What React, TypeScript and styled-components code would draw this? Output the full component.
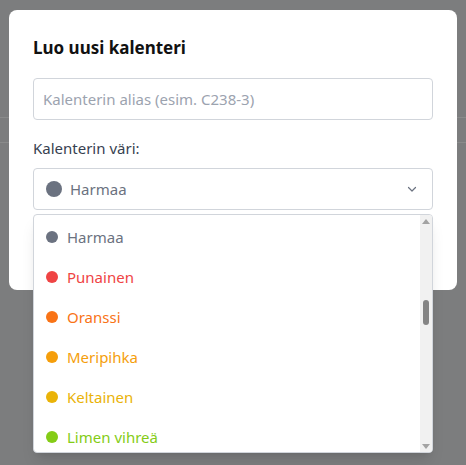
import React from "react";
import styled, { createGlobalStyle } from "styled-components";

const Global = createGlobalStyle`
  html, body { margin: 0; padding: 0; }
  body {
    font-family: "Noto Sans", "Open Sans", Arial, sans-serif;
    background: #7c7d7e;
  }
  * { box-sizing: border-box; }
`;

const Page = styled.div`
  position: relative;
  width: 466px;
  height: 465px;
  overflow: hidden;
  background: #7c7d7e;
  display: flex;
  flex-direction: column;
`;

const Backdrop = styled.div`
  position: absolute;
  inset: 0;
  display: flex;
  flex-direction: column;
  pointer-events: none;
`;

const BackLine = styled.div<{ $top: number }>`
  margin-top: ${(p) => p.$top}px;
  height: 1px;
  background: #8a8b8b;
`;

const Modal = styled.div`
  position: relative;
  margin: 10px 9px 0 9px;
  width: 448px;
  background: #ffffff;
  border-radius: 8px;
  padding: 24px;
  display: flex;
  flex-direction: column;
`;

const Title = styled.h2`
  margin: 0;
  font-size: 17px;
  line-height: 28px;
  font-weight: 700;
  color: #111111;
`;

const Input = styled.input`
  margin-top: 16px;
  height: 42px;
  width: 100%;
  border: 1px solid #d1d5db;
  border-radius: 4px;
  padding: 0 9px;
  font-family: inherit;
  font-size: 15px;
  color: #111827;
  outline: none;
  &::placeholder { color: #9ca3af; }
`;

const Label = styled.div`
  margin-top: 16px;
  font-size: 15px;
  line-height: 24px;
  color: #374151;
`;

const SelectWrap = styled.div`
  position: relative;
  margin-top: 8px;
`;

const SelectBox = styled.div`
  height: 42px;
  border: 1px solid #d1d5db;
  border-radius: 4px;
  padding: 0 14px 0 12px;
  display: flex;
  align-items: center;
  gap: 8px;
`;

const Dot = styled.span<{ $color: string; $size: number }>`
  flex: none;
  width: ${(p) => p.$size}px;
  height: ${(p) => p.$size}px;
  border-radius: 50%;
  background: ${(p) => p.$color};
`;

const SelectText = styled.span`
  flex: 1;
  font-size: 15px;
  color: #6b7280;
`;

const Footer = styled.div`
  height: 56px;
`;

const Dropdown = styled.div`
  position: absolute;
  top: calc(100% + 4px);
  left: 0;
  right: 0;
  height: 239px;
  background: #ffffff;
  border: 1px solid #d1d5db;
  border-radius: 4px;
  box-shadow: 0 10px 15px -3px rgba(0, 0, 0, 0.1), 0 4px 6px -4px rgba(0, 0, 0, 0.1);
  display: flex;
  overflow: hidden;
  z-index: 10;
`;

const List = styled.ul`
  flex: 1;
  margin: 0;
  padding: 2px 0 0 0;
  list-style: none;
`;

const Item = styled.li<{ $color: string }>`
  height: 40px;
  display: flex;
  align-items: center;
  gap: 9px;
  padding-left: 12px;
  font-size: 15px;
  color: ${(p) => p.$color};
`;

const Scrollbar = styled.div`
  flex: none;
  width: 12px;
  background: #f1f1f1;
  display: flex;
  flex-direction: column;
  align-items: center;
`;

const Arrow = styled.div<{ $up?: boolean }>`
  flex: none;
  height: 12px;
  display: flex;
  align-items: center;
  justify-content: center;
  width: 0;
  &::before {
    content: "";
    border-left: 4px solid transparent;
    border-right: 4px solid transparent;
    ${(p) => (p.$up ? "border-bottom: 5px solid #a3a3a3;" : "border-top: 5px solid #a3a3a3;")}
  }
`;

const Track = styled.div`
  flex: 1;
  width: 100%;
  display: flex;
  flex-direction: column;
  align-items: center;
`;

const Thumb = styled.div`
  margin-top: 73px;
  width: 6px;
  height: 25px;
  border-radius: 3px;
  background: #858585;
`;

const Chevron = () => (
  <svg width="12" height="12" viewBox="0 0 12 12" fill="none">
    <polyline points="2.5,4.5 6,8 9.5,4.5" stroke="#6b7280" strokeWidth="1.2" strokeLinecap="round" strokeLinejoin="round" />
  </svg>
);

const options = [
  { name: "Harmaa", color: "#6b7280" },
  { name: "Punainen", color: "#ef4444" },
  { name: "Oranssi", color: "#f97316" },
  { name: "Meripihka", color: "#f59e0b" },
  { name: "Keltainen", color: "#eab308" },
  { name: "Limen vihreä", color: "#84cc16" },
];

export default function App() {
  return (
    <>
      <Global />
      <Page>
        <Backdrop>
          <BackLine $top={117} />
          <BackLine $top={24} />
        </Backdrop>
        <Modal>
          <Title>Luo uusi kalenteri</Title>
          <Input placeholder="Kalenterin alias (esim. C238-3)" />
          <Label>Kalenterin väri:</Label>
          <SelectWrap>
            <SelectBox>
              <Dot $color="#6b7280" $size={16} />
              <SelectText>Harmaa</SelectText>
              <Chevron />
            </SelectBox>
            <Dropdown>
              <List>
                {options.map((o) => (
                  <Item key={o.name} $color={o.color}>
                    <Dot $color={o.color} $size={12} />
                    {o.name}
                  </Item>
                ))}
              </List>
              <Scrollbar>
                <Arrow $up />
                <Track>
                  <Thumb />
                </Track>
                <Arrow />
              </Scrollbar>
            </Dropdown>
          </SelectWrap>
          <Footer />
        </Modal>
      </Page>
    </>
  );
}
